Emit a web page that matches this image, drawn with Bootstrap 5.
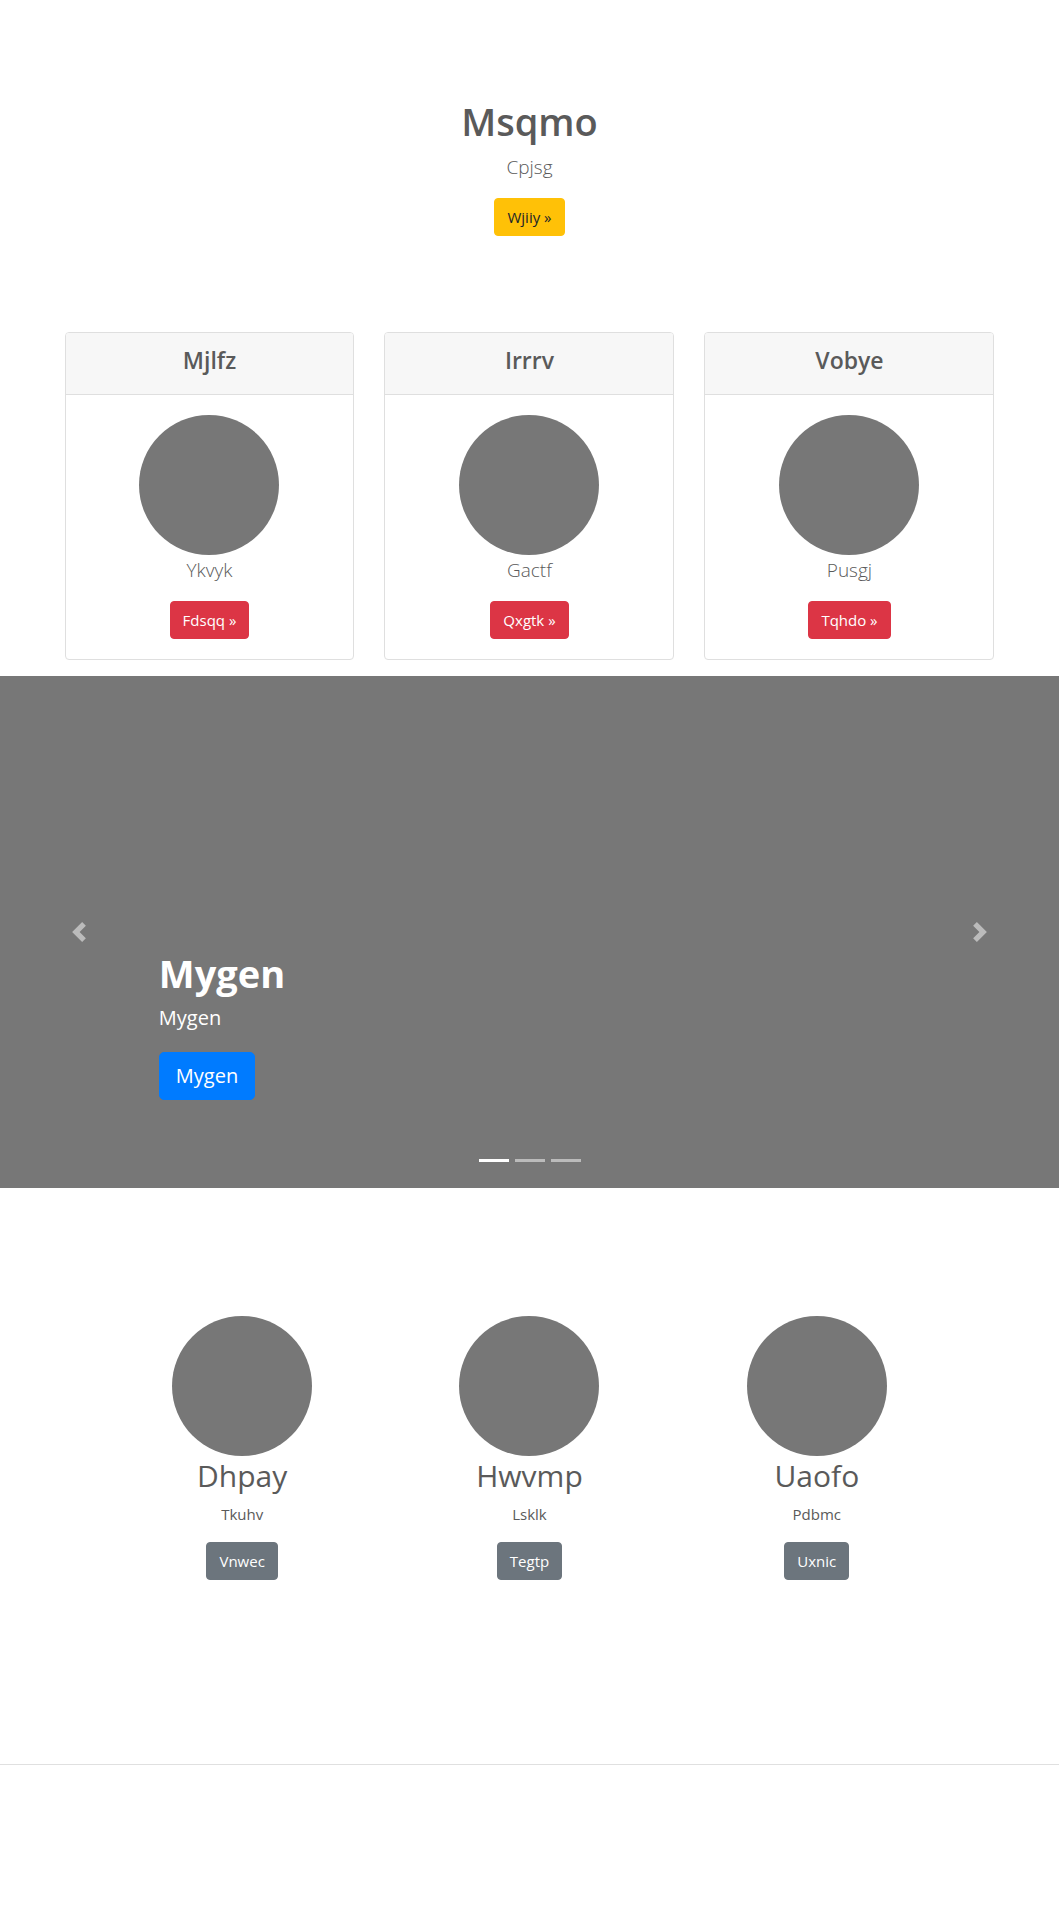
<!DOCTYPE html>
<html lang="en">
<head>
<meta charset="utf-8">
<meta name="viewport" content="width=device-width, initial-scale=1">
<title>Msqmo</title>
<link href="https://cdn.jsdelivr.net/npm/bootstrap@5.3.0/dist/css/bootstrap.min.css" rel="stylesheet">
<style>
  :root { --shade: #777; }
  body { font-family: "Segoe UI", "Open Sans", "Noto Sans", sans-serif; font-size: 15px; line-height: 24px; color: #5a5a5a; }
  h1, h2 { margin-bottom: 6px; }
  .btn { --bs-btn-font-size: 15px; --bs-btn-border-radius: 4px; line-height: 24px; }
  .btn-warning { --bs-btn-color: #212529; }
  .hero { padding: 96px 15px; }
  .hero-title { font-size: 38px; line-height: 50px; font-weight: 600; }
  .intro { font-size: 19px; line-height: 30px; font-weight: 300; }
  .page-width { max-width: 960px; padding: 0 15px; }
  .card { --bs-card-border-color: #dfdfdf; --bs-card-border-radius: 4px; --bs-card-inner-border-radius: 3px; --bs-card-cap-bg: #f7f7f7; --bs-card-spacer-x: 20px; --bs-card-spacer-y: 20px; --bs-card-cap-padding-y: 12px; }
  .card-row { --bs-gutter-x: 30px; }
  .card-name { font-size: 23px; line-height: 31px; font-weight: 600; }
  .portrait { width: 140px; height: 140px; background: var(--shade); }
  .carousel-item { height: 512px; background: var(--shade); }
  .carousel-caption { bottom: 48px; padding: 0 0 40px; }
  .carousel-caption p { font-size: 20px; line-height: 28px; margin-bottom: 20px; }
  .slide-title { font-size: 38px; line-height: 50px; font-weight: 700; }
  .btn-primary { --bs-btn-bg: #007bff; --bs-btn-border-color: #007bff; }
  .carousel .btn-lg { --bs-btn-font-size: 20px; --bs-btn-border-radius: 5px; --bs-btn-padding-y: 8px; line-height: 30px; }
  .carousel-control-prev svg, .carousel-control-next svg { width: 20px; height: 20px; fill: #fff; }
  .team { max-width: 862px; padding: 128px 0 96px; }
  .team-name { font-size: 30px; line-height: 40px; font-weight: 400; }
  .divider { margin: 72px 0 80px; color: #000; opacity: .12; }
</style>
</head>
<body>
<main>
  <header class="hero text-center">
    <h1 class="hero-title">Msqmo</h1>
    <p class="intro mb-3">Cpjsg</p>
    <button type="button" class="btn btn-warning">Wjiiy »</button>
  </header>

  <section class="container page-width">
    <div class="row card-row text-center">
      <div class="col-md-4">
        <article class="card mb-3">
          <div class="card-header"><h2 class="card-name">Mjlfz</h2></div>
          <div class="card-body">
            <div class="portrait rounded-circle mx-auto"></div>
            <p class="intro mb-3">Ykvyk</p>
            <button type="button" class="btn btn-danger">Fdsqq »</button>
          </div>
        </article>
      </div>
      <div class="col-md-4">
        <article class="card mb-3">
          <div class="card-header"><h2 class="card-name">Irrrv</h2></div>
          <div class="card-body">
            <div class="portrait rounded-circle mx-auto"></div>
            <p class="intro mb-3">Gactf</p>
            <button type="button" class="btn btn-danger">Qxgtk »</button>
          </div>
        </article>
      </div>
      <div class="col-md-4">
        <article class="card mb-3">
          <div class="card-header"><h2 class="card-name">Vobye</h2></div>
          <div class="card-body">
            <div class="portrait rounded-circle mx-auto"></div>
            <p class="intro mb-3">Pusgj</p>
            <button type="button" class="btn btn-danger">Tqhdo »</button>
          </div>
        </article>
      </div>
    </div>
  </section>

  <section id="slides" class="carousel slide">
    <div class="carousel-indicators">
      <button type="button" data-bs-target="#slides" data-bs-slide-to="0" class="active" aria-current="true" aria-label="1"></button>
      <button type="button" data-bs-target="#slides" data-bs-slide-to="1" aria-label="2"></button>
      <button type="button" data-bs-target="#slides" data-bs-slide-to="2" aria-label="3"></button>
    </div>
    <div class="carousel-inner">
      <div class="carousel-item active">
        <div class="carousel-caption text-start">
          <h2 class="slide-title">Mygen</h2>
          <p>Mygen</p>
          <button type="button" class="btn btn-lg btn-primary d-block">Mygen</button>
        </div>
      </div>
      <div class="carousel-item"></div>
      <div class="carousel-item"></div>
    </div>
    <button class="carousel-control-prev" type="button" data-bs-target="#slides" data-bs-slide="prev" aria-label="Previous">
      <svg viewBox="0 0 8 8" aria-hidden="true"><path d="M5.25 0l-4 4 4 4 1.5-1.5L4.25 4l2.5-2.5L5.25 0z"/></svg>
    </button>
    <button class="carousel-control-next" type="button" data-bs-target="#slides" data-bs-slide="next" aria-label="Next">
      <svg viewBox="0 0 8 8" aria-hidden="true"><path d="M2.75 0l-1.5 1.5L3.75 4l-2.5 2.5L2.75 8l4-4-4-4z"/></svg>
    </button>
  </section>

  <section class="container team">
    <div class="row g-0 text-center">
      <div class="col-md-4 mb-3">
        <div class="portrait rounded-circle mx-auto"></div>
        <h2 class="team-name">Dhpay</h2>
        <p class="mb-3">Tkuhv</p>
        <button type="button" class="btn btn-secondary">Vnwec</button>
      </div>
      <div class="col-md-4 mb-3">
        <div class="portrait rounded-circle mx-auto"></div>
        <h2 class="team-name">Hwvmp</h2>
        <p class="mb-3">Lsklk</p>
        <button type="button" class="btn btn-secondary">Tegtp</button>
      </div>
      <div class="col-md-4 mb-3">
        <div class="portrait rounded-circle mx-auto"></div>
        <h2 class="team-name">Uaofo</h2>
        <p class="mb-3">Pdbmc</p>
        <button type="button" class="btn btn-secondary">Uxnic</button>
      </div>
    </div>
  </section>
  <hr class="divider">
</main>
<script src="https://cdn.jsdelivr.net/npm/bootstrap@5.3.0/dist/js/bootstrap.bundle.min.js"></script>
</body>
</html>
